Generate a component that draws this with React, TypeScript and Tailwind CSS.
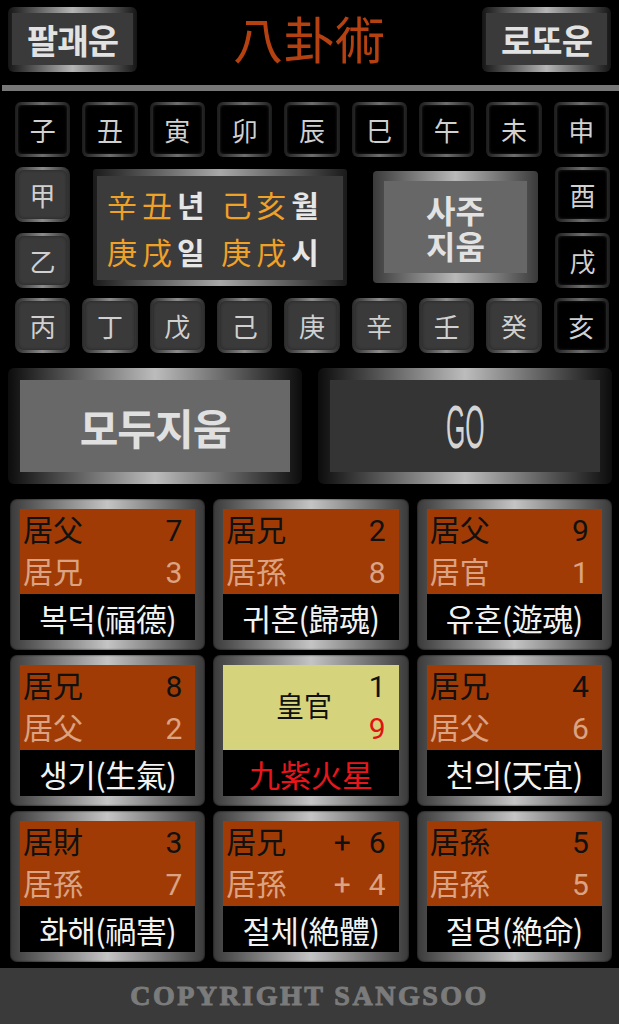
import React from "react";

const KR = "font-['Noto_Sans_CJK_KR','Noto_Sans',sans-serif]";

function Cell({ ch, stem = false }: { ch: string; stem?: boolean }) {
  return (
    <div
      className={
        stem
          ? "h-[55px] rounded-[8px] p-[3px] bg-[linear-gradient(to_right,#2a2a2a,#8c8c8c_50%,#2a2a2a)]"
          : "h-[55px] rounded-[6px] p-[3px] bg-[linear-gradient(to_right,#1c1c1c,#6e6e6e_50%,#1c1c1c)]"
      }
    >
      <div
        className={
          stem
            ? "h-full w-full rounded-[6px] bg-[#3a3a3a] shadow-[inset_0_0_3px_#222] flex items-center justify-center text-[26px] text-[#d0d0d0]"
            : "h-full w-full rounded-[4px] bg-black shadow-[inset_0_0_3px_#222] flex items-center justify-center text-[26px] text-[#d0d0d0]"
        }
      >
        {ch}
      </div>
    </div>
  );
}

function TopButton({ label }: { label: string }) {
  return (
    <div className="w-[129px] h-[65px] rounded-[6px] px-[4px] pt-[6px] pb-[7px] bg-[linear-gradient(to_right,#151515,#b5b5b5_50%,#151515)]">
      <div className="h-full w-full bg-[#3a3a3a] flex items-center justify-center text-[34px] font-bold text-[#e2e2e2] tracking-[-1px]">
        {label}
      </div>
    </div>
  );
}

type CardData = {
  a: string;
  an: string;
  b: string;
  bn: string;
  label: string;
  plus?: boolean;
};

const cards: (CardData | null)[] = [
  { a: "居父", an: "7", b: "居兄", bn: "3", label: "복덕(福德)" },
  { a: "居兄", an: "2", b: "居孫", bn: "8", label: "귀혼(歸魂)" },
  { a: "居父", an: "9", b: "居官", bn: "1", label: "유혼(遊魂)" },
  { a: "居兄", an: "8", b: "居父", bn: "2", label: "생기(生氣)" },
  null,
  { a: "居兄", an: "4", b: "居父", bn: "6", label: "천의(天宜)" },
  { a: "居財", an: "3", b: "居孫", bn: "7", label: "화해(禍害)" },
  { a: "居兄", an: "6", b: "居孫", bn: "4", label: "절체(絶體)", plus: true },
  { a: "居孫", an: "5", b: "居孫", bn: "5", label: "절명(絶命)" },
];

function CardFrame({ children }: { children: React.ReactNode }) {
  return (
    <div className="h-[151px] rounded-[7px] p-[10px] bg-[linear-gradient(to_right,#3a3a3a,#c4c4c4_50%,#3a3a3a)] shadow-[inset_0_0_2px_#000] flex flex-col">
      {children}
    </div>
  );
}

function Card({ d }: { d: CardData }) {
  return (
    <CardFrame>
      <div className="h-[85px] bg-[#a13b06] flex flex-col pl-[3px] pr-[13px] text-[30px] font-['Roboto','Noto_Sans_CJK_KR',sans-serif]">
        <div className="h-[42px] flex items-center justify-between text-[#111]">
          <span>{d.a}</span>
          <span className="flex items-center">
            {d.plus && <span className="mr-[18px]">+</span>}
            {d.an}
          </span>
        </div>
        <div className="h-[43px] flex items-center justify-between text-[#dba382]">
          <span>{d.b}</span>
          <span className="flex items-center">
            {d.plus && <span className="mr-[18px]">+</span>}
            {d.bn}
          </span>
        </div>
      </div>
      <div className="flex-1 bg-black flex items-center justify-center text-[31px] text-[#f2f2f2] leading-none tracking-[-0.5px]">
        {d.label}
      </div>
    </CardFrame>
  );
}

function CenterCard() {
  return (
    <CardFrame>
      <div className="h-[85px] bg-[#d5d47d] flex font-['Roboto','Noto_Sans_CJK_KR',sans-serif]">
        <div className="flex-1 pl-[16px] flex items-center justify-center text-[28px] text-[#111]">
          皇官
        </div>
        <div className="flex flex-col pr-[13px] text-[30px]">
          <div className="h-[42px] flex items-center text-[#111]">1</div>
          <div className="h-[43px] flex items-center text-[#e01212]">9</div>
        </div>
      </div>
      <div className="flex-1 bg-black flex items-center justify-center text-[31px] text-[#e8161a] leading-none">
        九紫火星
      </div>
    </CardFrame>
  );
}

export default function App() {
  const branches = ["子", "丑", "寅", "卯", "辰", "巳", "午", "未", "申"];
  const stems = ["丙", "丁", "戊", "己", "庚", "辛", "壬", "癸", "亥"];

  return (
    <div className={`w-[619px] h-[1024px] bg-black flex flex-col overflow-hidden ${KR}`}>
      {/* header */}
      <div className="h-[85px] flex items-start justify-between px-[8px] pt-[7px]">
        <TopButton label="팔괘운" />
        <div className="h-[65px] flex items-center text-[50px] text-[#b4410f] tracking-[1px] pb-[4px]">
          八卦術
        </div>
        <TopButton label="로또운" />
      </div>
      <div className="h-[6px] ml-[2px] bg-[#777]" />

      {/* branches */}
      <div className="mt-[11px] grid grid-cols-9 gap-x-[12px] pl-[15px] pr-[10px]">
        {branches.map((c) => (
          <Cell key={c} ch={c} />
        ))}
      </div>

      {/* middle row */}
      <div className="mt-[10px] h-[120px] flex items-center pl-[15px]">
        <div className="w-[55px] flex flex-col gap-[11px]">
          <Cell ch="甲" stem />
          <Cell ch="乙" stem />
        </div>
        <div className="ml-[23px] w-[254px] h-[117px] rounded-[3px] px-[4px] pt-[7px] pb-[6px] bg-[linear-gradient(to_right,#1a1a1a,#a8a8a8_50%,#1a1a1a)]">
          <div className="h-full w-full bg-[#3b3b3b] flex flex-col justify-center pl-[10px] text-[30px] tracking-[5px] leading-[47px]">
            <div className="whitespace-nowrap">
              <span className="text-[#f0a127]">辛丑</span>
              <span className="text-[#e6e6e6] font-bold">년</span>
              <span className="text-[#f0a127]"> 己亥</span>
              <span className="text-[#e6e6e6] font-bold">월</span>
            </div>
            <div className="whitespace-nowrap">
              <span className="text-[#f0a127]">庚戌</span>
              <span className="text-[#e6e6e6] font-bold">일</span>
              <span className="text-[#f0a127]"> 庚戌</span>
              <span className="text-[#e6e6e6] font-bold">시</span>
            </div>
          </div>
        </div>
        <div className="ml-[26px] w-[165px] h-[112px] rounded-[4px] px-[11px] pt-[10px] pb-[10px] bg-[linear-gradient(to_right,#3a3a3a,#b8b8b8_50%,#3a3a3a)]">
          <div className="h-full w-full bg-[#676767] flex items-center justify-center">
            <p className="text-center text-[32px] font-bold text-[#e2e2e2] leading-[36px]">
              사주
              <br />
              지움
            </p>
          </div>
        </div>
        <div className="ml-[17px] w-[55px] flex flex-col gap-[11px]">
          <Cell ch="酉" />
          <Cell ch="戌" />
        </div>
      </div>

      {/* stems */}
      <div className="mt-[11px] grid grid-cols-9 gap-x-[12px] pl-[15px] pr-[10px]">
        {stems.map((c, i) => (
          <Cell key={c} ch={c} stem={i < 8} />
        ))}
      </div>

      {/* action buttons */}
      <div className="mt-[15px] flex gap-[16px] pl-[8px] pr-[7px]">
        <div className="flex-1 h-[116px] rounded-[6px] p-[12px] bg-[linear-gradient(to_right,#0c0c0c,#bcbcbc_50%,#0c0c0c)]">
          <div className="h-full w-full bg-[#686868] flex items-center justify-center text-[42px] font-bold text-[#e0e0e0] tracking-[-1px]">
            모두지움
          </div>
        </div>
        <div className="flex-1 h-[116px] rounded-[6px] p-[12px] bg-[linear-gradient(to_right,#0c0c0c,#bcbcbc_50%,#0c0c0c)]">
          <div className="h-full w-full bg-[#343434] flex items-center justify-center">
            <span className="inline-block scale-x-[0.4] text-[62px] leading-none text-[#d4d4d4] font-['Liberation_Sans',sans-serif] pt-[2px]">
              GO
            </span>
          </div>
        </div>
      </div>

      {/* palace grid */}
      <div className="mt-[15px] grid grid-cols-3 gap-x-[8px] gap-y-[5px] pl-[10px] pr-[7px]">
        {cards.map((d, i) => (d ? <Card key={i} d={d} /> : <CenterCard key={i} />))}
      </div>

      {/* footer */}
      <div className="mt-auto h-[56px] bg-[#3a3a3a] flex items-center justify-center">
        <span className="font-['Liberation_Serif',serif] font-bold text-[28px] text-[#7b7b7b] tracking-[2.5px] [-webkit-text-stroke:1px_#7b7b7b]">
          COPYRIGHT SANGSOO
        </span>
      </div>
    </div>
  );
}
